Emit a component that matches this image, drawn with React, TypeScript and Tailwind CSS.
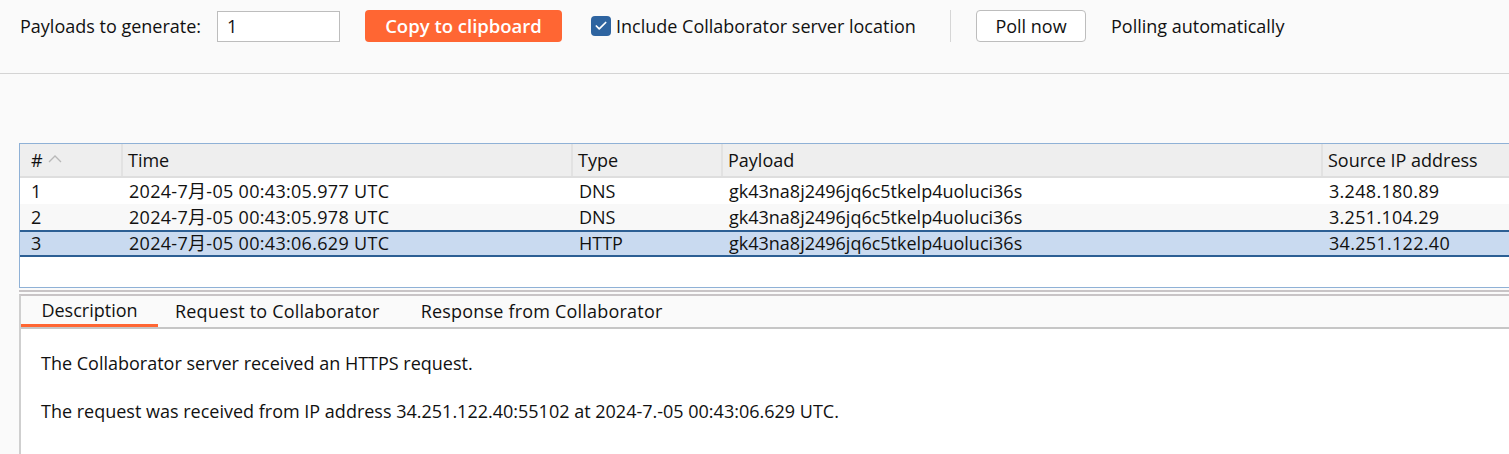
import { Check } from "lucide-react";

const rows = [
  { n: "1", time: "2024-7月-05 00:43:05.977 UTC", type: "DNS", payload: "gk43na8j2496jq6c5tkelp4uoluci36s", ip: "3.248.180.89" },
  { n: "2", time: "2024-7月-05 00:43:05.978 UTC", type: "DNS", payload: "gk43na8j2496jq6c5tkelp4uoluci36s", ip: "3.251.104.29" },
  { n: "3", time: "2024-7月-05 00:43:06.629 UTC", type: "HTTP", payload: "gk43na8j2496jq6c5tkelp4uoluci36s", ip: "34.251.122.40" },
];

const font = { fontFamily: '"Open Sans", "Noto Sans CJK SC", sans-serif' };

export default function App() {
  return (
    <div className="w-[1509px] h-[454px] overflow-hidden bg-[#fafafa] text-[18px] text-[#111]" style={font}>
      {/* toolbar */}
      <div className="h-[74px] border-b border-[#d4d4d4] flex items-start pt-[10px] pl-[20px]">
        <div className="flex items-center h-[32px]">
          <span className="w-[197px] whitespace-nowrap">Payloads to generate:</span>
          <input
            defaultValue="1"
            className="w-[123px] h-[31px] bg-white border border-[#bdbdbd] px-[9px] outline-none"
          />
          <button className="ml-[25px] w-[197px] h-[32px] bg-[#ff6633] text-white font-semibold text-[18.5px] rounded-[4px]">
            Copy to clipboard
          </button>
          <span className="ml-[29px] w-[20px] h-[20px] rounded-[4px] bg-[#2e64a0] flex items-center justify-center">
            <Check size={14} strokeWidth={3} className="text-white" />
          </span>
          <span className="ml-[5px] w-[305px] whitespace-nowrap">Include Collaborator server location</span>
          <span className="ml-[29px] w-px h-[32px] bg-[#d6d6d6]" />
          <button className="ml-[25px] w-[110px] h-[32px] bg-white border border-[#bdbdbd] rounded-[4px]">
            Poll now
          </button>
          <span className="ml-[25px] whitespace-nowrap">Polling automatically</span>
        </div>
      </div>

      {/* table */}
      <div className="mt-[69px] ml-[19px] w-[1520px] h-[145px] border border-[#8fb1d6] bg-white">
        <div className="flex h-[34px] bg-[#eeeeee] border-b-2 border-[#dedede] items-center">
          <div className="w-[103px] h-full flex items-center pl-[11px] border-r-2 border-[#e2e2e2]">
            #
            <svg width="14" height="8" viewBox="0 0 14 8" className="ml-[5px] mb-[3px]">
              <polyline points="1,7 7,1 13,7" fill="none" stroke="#b8b8b8" strokeWidth="1.3" />
            </svg>
          </div>
          <div className="w-[450px] h-full flex items-center pl-[5px] border-r-2 border-[#e2e2e2]">Time</div>
          <div className="w-[150px] h-full flex items-center pl-[5px] border-r-2 border-[#e2e2e2]">Type</div>
          <div className="w-[600px] h-full flex items-center pl-[5px] border-r-2 border-[#e2e2e2]">Payload</div>
          <div className="flex-1 h-full flex items-center pl-[5px]">Source IP address</div>
        </div>
        {rows.map((r, i) => (
          <div
            key={r.n}
            className={
              i === 2
                ? "flex h-[27px] items-center bg-[#c9daf0] border-y-2 border-[#2c5f94] whitespace-nowrap"
                : i === 1
                ? "flex h-[26px] items-center bg-[#f8f8f8] whitespace-nowrap"
                : "flex h-[26px] items-center bg-white whitespace-nowrap"
            }
          >
            <div className="w-[103px] pl-[11px]">{r.n}</div>
            <div className="w-[450px] pl-[6px] tracking-[0.3px]">{r.time}</div>
            <div className="w-[150px] pl-[6px]">{r.type}</div>
            <div className="w-[600px] pl-[6px]">{r.payload}</div>
            <div className="flex-1 pl-[6px] tracking-[0.3px]">{r.ip}</div>
          </div>
        ))}
      </div>

      {/* detail panel */}
      <div className="mt-[2px] ml-[19px] border-t-2 border-[#c8c4c6]">
        <div className="border-t-2 border-[#c8c4c6] mt-[2px] border-l-2 border-l-[#cfcfcf]">
          <div className="flex h-[33px] items-end border-b-2 border-[#c6c6c6]">
            <div className="w-[137px] h-full flex items-center justify-center border-b-[3px] border-[#ff6633]">
              Description
            </div>
            <div className="h-full flex items-center pl-[17px] pr-[22px] tracking-[0.2px]">Request to Collaborator</div>
            <div className="h-full flex items-center pl-[19px] tracking-[0.2px]">Response from Collaborator</div>
          </div>
          <div className="bg-white h-[130px] pt-[21px] pl-[20px]">
            <p>The Collaborator server received an HTTPS request.</p>
            <p className="mt-[21px]">
              The request was received from IP address 34.251.122.40:55102 at 2024-7.-05 00:43:06.629 UTC.
            </p>
          </div>
        </div>
      </div>
    </div>
  );
}
